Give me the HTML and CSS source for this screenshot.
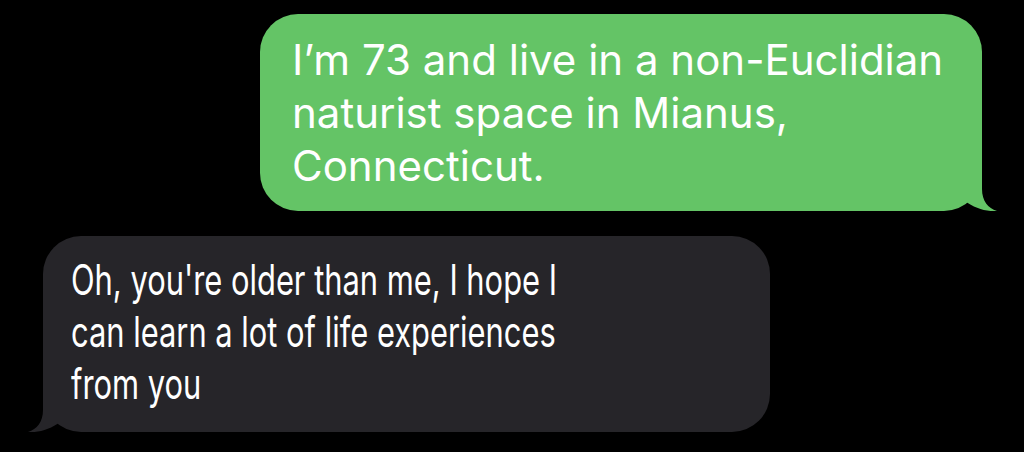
FILE: index.html
```html
<!DOCTYPE html>
<html lang="en">
<head>
<meta charset="utf-8">
<title>Messages</title>
<link rel="stylesheet" href="styles.css">
</head>
<body>
<main class="thread">
  <div class="bubble sent">
    <p class="text">I’m 73 and live in a non-Euclidian naturist space in Mianus, Connecticut.</p>
    <svg class="tail tail-right" width="40" height="50" viewBox="0 0 40 50" aria-hidden="true">
      <path d="M0 0 L25 0 L25 28 C25 40 31 47 40 50 C30 51 17 47 8 40 L0 40 Z" fill="#64c466"/>
    </svg>
  </div>
  <div class="bubble received">
    <p class="text narrow">Oh, you're older than me, I hope I can learn a lot of life experiences from you</p>
    <svg class="tail tail-left" width="40" height="50" viewBox="0 0 40 50" aria-hidden="true">
      <path d="M40 0 L15 0 L15 28 C15 40 9 47 0 50 C10 51 23 47 32 40 L40 40 Z" fill="#262529"/>
    </svg>
  </div>
</main>
</body>
</html>
```

FILE: styles.css
```css
html, body {
  margin: 0;
  padding: 0;
  background: #000;
}

body {
  width: 1024px;
  height: 452px;
  overflow: hidden;
  font-family: Inter, Roboto, "Liberation Sans", sans-serif;
  color: #fff;
}

.thread {
  display: flex;
  flex-direction: column;
  padding-top: 14px;
}

.bubble {
  position: relative;
  box-sizing: border-box;
  border-radius: 38px;
}

.sent {
  align-self: flex-end;
  margin-right: 42px;
  width: 722px;
  height: 197px;
  background: #64c466;
  padding: 19px 20px 0 32px;
}

.received {
  align-self: flex-start;
  margin-left: 43px;
  margin-top: 25px;
  width: 727px;
  height: 196px;
  background: #262529;
  padding: 18px 0 0 28px;
}

.text {
  margin: 0;
  font-size: 42px;
  line-height: 53px;
  font-weight: 400;
}

.narrow {
  width: 720px;
  line-height: 52px;
  transform: scaleX(0.735);
  transform-origin: 0 0;
}

.tail {
  position: absolute;
  bottom: 0;
  display: block;
}

.tail-right {
  right: -15px;
}

.tail-left {
  left: -15px;
}
```
